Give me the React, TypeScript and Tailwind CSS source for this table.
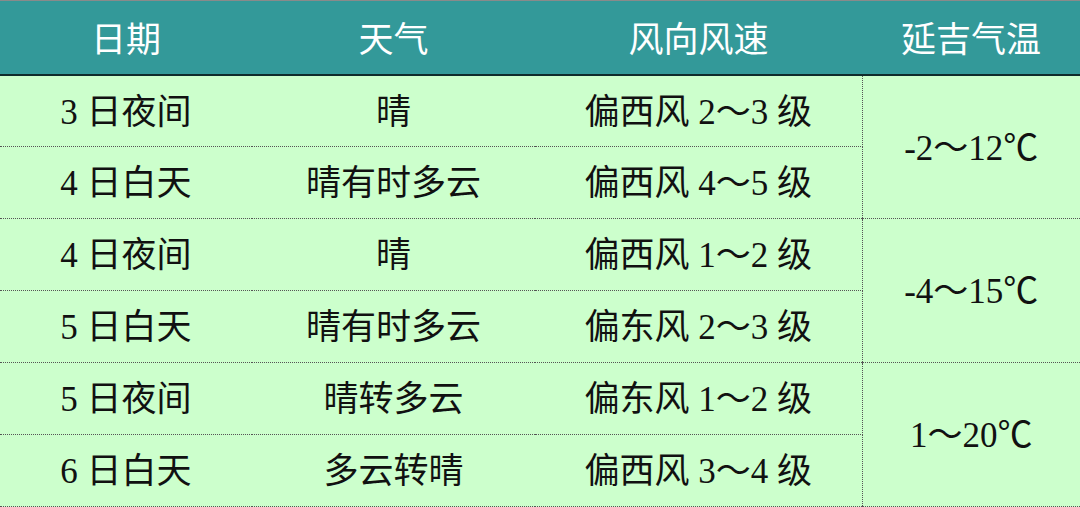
import React from "react";

const rows = [
  { d: "3 日夜间", w: "晴", f: "偏西风 2～3 级" },
  { d: "4 日白天", w: "晴有时多云", f: "偏西风 4～5 级" },
  { d: "4 日夜间", w: "晴", f: "偏西风 1～2 级" },
  { d: "5 日白天", w: "晴有时多云", f: "偏东风 2～3 级" },
  { d: "5 日夜间", w: "晴转多云", f: "偏东风 1～2 级" },
  { d: "6 日白天", w: "多云转晴", f: "偏西风 3～4 级" },
];
const temps = ["-2～12℃", "-4～15℃", "1～20℃"];

export default function App() {
  return (
    <div className="w-[1080px] h-[507px] overflow-hidden bg-[#ccffcc]">
      <table className="w-[1080px] border-collapse table-fixed text-[#111] [font-family:'Liberation_Serif','Noto_Sans_CJK_SC',serif] text-[35px]">
        <colgroup>
          <col className="w-[252px]" />
          <col className="w-[283px]" />
          <col className="w-[327px]" />
          <col className="w-[218px]" />
        </colgroup>
        <thead>
          <tr className="h-[74px] bg-[#339999] text-white [font-family:'Noto_Sans_CJK_SC',sans-serif] text-[35px] border-t border-t-[#8a8a8a] border-b-2 border-b-[#0f2b2b]">
            <th className="font-normal">日期</th>
            <th className="font-normal">天气</th>
            <th className="font-normal">风向风速</th>
            <th className="font-normal">延吉气温</th>
          </tr>
        </thead>
        <tbody>
          {rows.map((r, i) => (
            <tr key={i} className="h-[72px]">
              <td className="pt-1 text-center border-b border-dotted border-b-[#555]">{r.d}</td>
              <td className="pt-1 text-center border-b border-dotted border-b-[#555]">{r.w}</td>
              <td className="pt-1 text-center border-b border-r border-dotted border-[#555]">{r.f}</td>
              {i % 2 === 0 && (
                <td rowSpan={2} className="pt-1 text-center border-b border-dotted border-b-[#555]">
                  {temps[i / 2]}
                </td>
              )}
            </tr>
          ))}
        </tbody>
      </table>
    </div>
  );
}
